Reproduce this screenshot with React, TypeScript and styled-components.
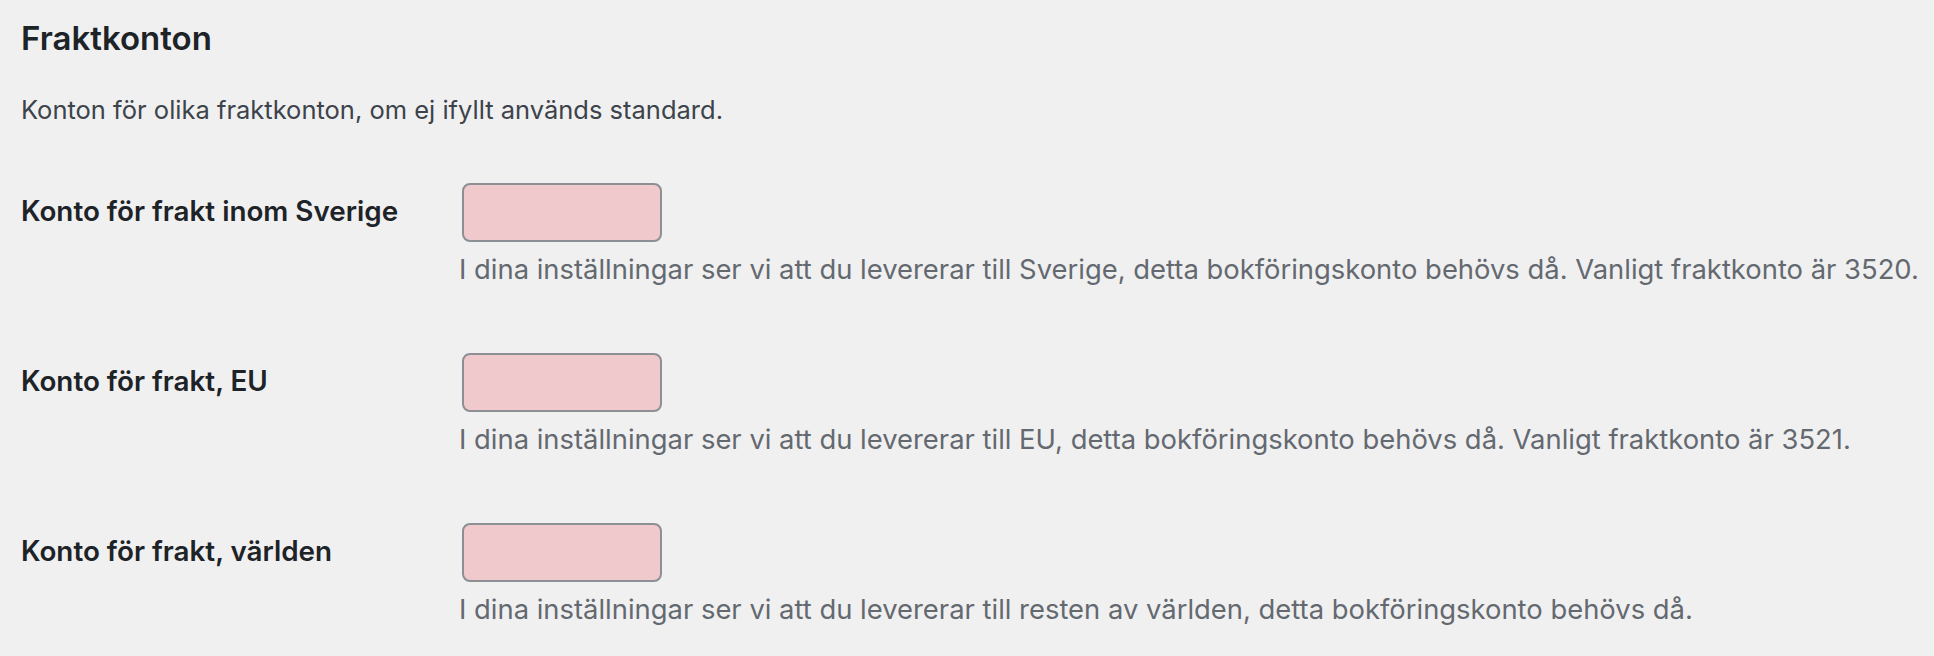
import React from 'react';
import styled, { createGlobalStyle } from 'styled-components';

const GlobalStyle = createGlobalStyle`
	html, body {
		margin: 0;
		padding: 0;
		background: #f0f0f1;
	}
	body {
		font-family: Inter, 'Liberation Sans', sans-serif;
		color: #3c434a;
	}
`;

const rows = [
	{
		label: 'Konto för frakt inom Sverige',
		help: 'I dina inställningar ser vi att du levererar till Sverige, detta bokföringskonto behövs då. Vanligt fraktkonto är 3520.',
	},
	{
		label: 'Konto för frakt, EU',
		help: 'I dina inställningar ser vi att du levererar till EU, detta bokföringskonto behövs då. Vanligt fraktkonto är 3521.',
	},
	{
		label: 'Konto för frakt, världen',
		help: 'I dina inställningar ser vi att du levererar till resten av världen, detta bokföringskonto behövs då.',
	},
];

const App = () => {
	return (
		<>
			<GlobalStyle />
			<Wrap>
				<Title>Fraktkonton</Title>
				<Intro>Konton för olika fraktkonton, om ej ifyllt används standard.</Intro>
				<FormTable>
					{rows.map((r) => (
						<FormRow key={r.label}>
							<RowLabel>{r.label}</RowLabel>
							<RowField>
								<AccountInput type='text' />
								<Help>{r.help}</Help>
							</RowField>
						</FormRow>
					))}
				</FormTable>
			</Wrap>
		</>
	);
};

const Wrap = styled.div`
	padding: 18px 0 0 21px;
`;

const Title = styled.h2`
	margin: 0;
	font-size: 33px;
	font-weight: 600;
	line-height: 40px;
	color: #1d2327;
`;

const Intro = styled.p`
	margin: 35px 0 0;
	font-size: 25.5px;
	line-height: 34px;
	color: #3c434a;
`;

const FormTable = styled.div`
	display: flex;
	flex-direction: column;
	gap: 66px;
	margin-top: 56px;
`;

const FormRow = styled.div`
	display: grid;
	grid-template-columns: 441px 1fr;
	align-items: start;
`;

const RowLabel = styled.div`
	padding-top: 10px;
	font-size: 27.8px;
	font-weight: 600;
	line-height: 36px;
	color: #1d2327;
`;

const RowField = styled.div`
	display: flex;
	flex-direction: column;
	align-items: flex-start;
`;

const AccountInput = styled.input`
	box-sizing: border-box;
	width: 200px;
	height: 59px;
	margin: 0;
	border: 2px solid #8c8f94;
	border-radius: 8px;
	background: #efc9cc;
	outline: none;
`;

const Help = styled.p`
	margin: 9px 0 0 -3px;
	font-size: 27.4px;
	line-height: 36px;
	color: #646970;
	white-space: nowrap;
`;

export default App;
